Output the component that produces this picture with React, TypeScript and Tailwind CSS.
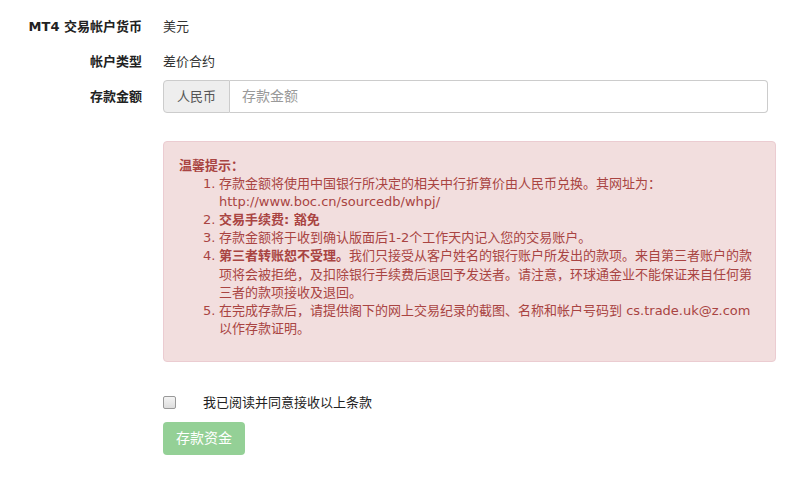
import React from "react";

const font = { fontFamily: '"DejaVu Sans", "Noto Sans CJK SC", sans-serif' };

function Row({ label, children }: { label: string; children: React.ReactNode }) {
  return (
    <div className="flex h-[35px] items-center">
      <div className="w-[142px] text-right text-[13px] font-bold text-[#222]">{label}</div>
      <div className="ml-[21px] flex-1 text-[13px] text-[#333]">{children}</div>
    </div>
  );
}

export default function App() {
  return (
    <div className="h-[486px] w-[804px] bg-white pt-[9px]" style={font}>
      <Row label="MT4 交易帐户货币">美元</Row>
      <Row label="帐户类型">差价合约</Row>
      <Row label="存款金额">
        <div className="flex h-[33px] w-[605px]">
          <span className="flex items-center rounded-l-[4px] border border-[#ccc] bg-[#eee] px-[13px] text-[13px] text-[#555]">
            人民币
          </span>
          <input
            className="flex-1 rounded-r-[4px] border border-l-0 border-[#ccc] px-[12px] text-[14px] text-[#555] outline-none placeholder:text-[#999]"
            placeholder="存款金额"
          />
        </div>
      </Row>

      <div className="ml-[163px] mt-[27px] h-[221px] w-[613px] rounded-[4px] border border-[#ebccd1] bg-[#f2dede] px-[15px] pt-[15px] text-[13px] leading-[18.1px] text-[#a94442]">
        <div className="font-bold">温馨提示：</div>
        <ol className="ml-[24px] list-none">
          <li className="flex">
            <span className="w-[16px] shrink-0">1.</span>
            <span>
              存款金额将使用中国银行所决定的相关中行折算价由人民币兑换。其网址为：
              <br />
              http://www.boc.cn/sourcedb/whpj/
            </span>
          </li>
          <li className="flex">
            <span className="w-[16px] shrink-0">2.</span>
            <span className="font-bold">交易手续费: 豁免</span>
          </li>
          <li className="flex">
            <span className="w-[16px] shrink-0">3.</span>
            <span>存款金额将于收到确认版面后1-2个工作天内记入您的交易账户。</span>
          </li>
          <li className="flex">
            <span className="w-[16px] shrink-0">4.</span>
            <span>
              <b>第三者转账恕不受理。</b>我们只接受从客户姓名的银行账户所发出的款项。来自第三者账户的款
              <br />
              项将会被拒绝，及扣除银行手续费后退回予发送者。请注意，环球通金业不能保证来自任何第
              <br />
              三者的款项接收及退回。
            </span>
          </li>
          <li className="flex">
            <span className="w-[16px] shrink-0">5.</span>
            <span>
              在完成存款后，请提供阁下的网上交易纪录的截图、名称和帐户号码到 cs.trade.uk@z.com
              <br />
              以作存款证明。
            </span>
          </li>
        </ol>
      </div>

      <div className="ml-[163px] mt-[31px] flex items-center">
        <span className="h-[13px] w-[13px] rounded-[2px] border border-[#999] bg-gradient-to-b from-[#f4f4f4] to-[#ddd]" />
        <span className="ml-[27px] text-[13px] text-[#222]">我已阅读并同意接收以上条款</span>
      </div>

      <div className="ml-[163px] mt-[9px]">
        <button className="h-[33px] w-[82px] rounded-[4px] bg-[#94d096] text-[14px] text-white">存款资金</button>
      </div>
    </div>
  );
}
